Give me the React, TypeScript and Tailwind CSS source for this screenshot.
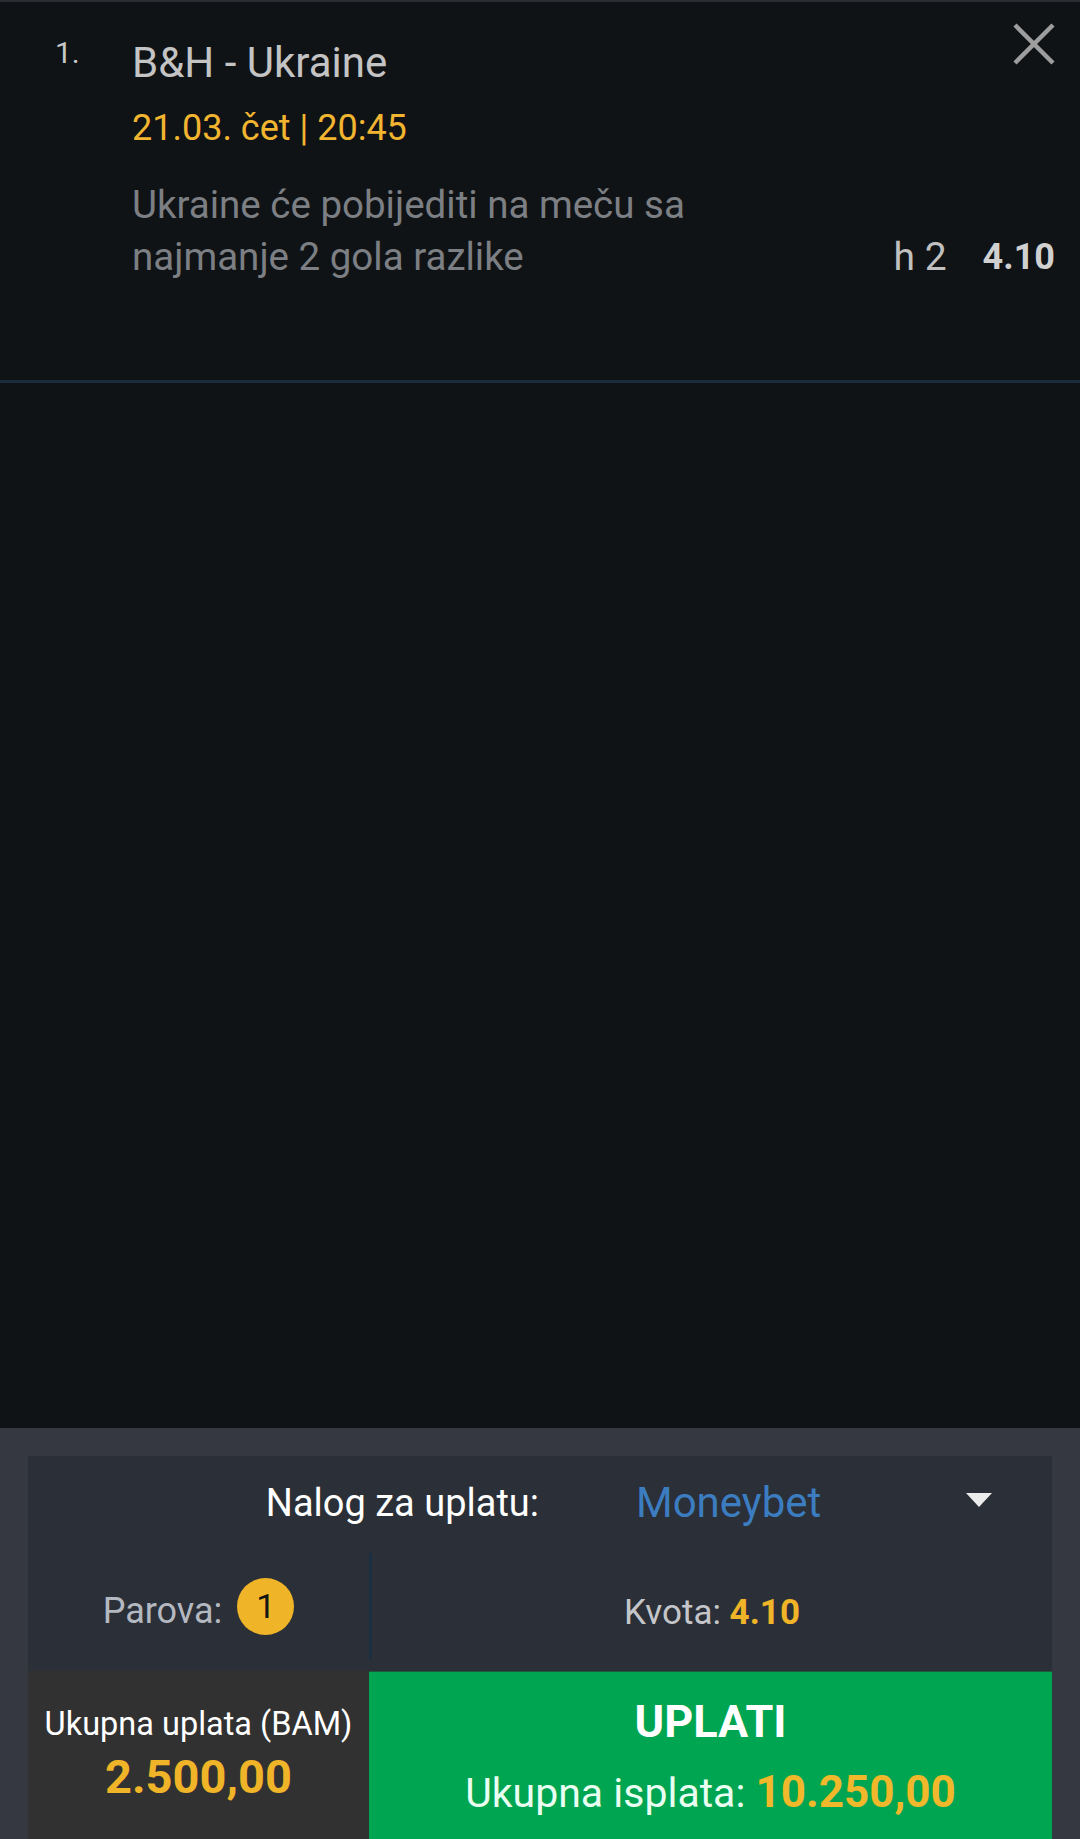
import React from "react";

export default function App() {
  return (
    <div
      className="w-[1080px] h-[1839px] flex flex-col bg-[#101316] overflow-hidden"
      style={{ fontFamily: "Roboto, 'Noto Sans', sans-serif" }}
    >
      {/* Bet item */}
      <div className="h-[380px] border-t-2 border-[#2a2d32] pt-[21px] pl-[55px] pr-[25px] flex">
        <div className="w-[77px] shrink-0 mt-[13px] text-[30px] leading-[34px] text-[#c8c8c8]">1.</div>
        <div className="flex-1 flex flex-col">
          <div className="flex justify-between items-start">
            <div className="flex flex-col">
              <div className="mt-[16px] text-[42px] leading-[48px] text-[#c4c4c4]">B&amp;H - Ukraine</div>
              <div className="mt-[19px] text-[36px] leading-[44px] text-[#f2b530]">21.03. čet | 20:45</div>
            </div>
            <button className="w-[42px] h-[42px] shrink-0">
              <svg width="42" height="42" viewBox="0 0 42 42">
                <line x1="2" y1="2" x2="40" y2="40" stroke="#9e9e9e" strokeWidth="4.5" />
                <line x1="40" y1="2" x2="2" y2="40" stroke="#9e9e9e" strokeWidth="4.5" />
              </svg>
            </button>
          </div>
          <div className="mt-[29px] flex justify-between items-end">
            <div className="text-[38.5px] leading-[52px] text-[#7c7f83]">
              Ukraine će pobijediti na meču sa
              <br />
              najmanje 2 gola razlike
            </div>
            <div className="flex items-end gap-[36px] leading-[52px]">
              <span className="text-[39px] text-[#c0c0c0]">h 2</span>
              <span className="text-[36px] font-bold text-[#d0d0d0]">4.10</span>
            </div>
          </div>
        </div>
      </div>
      <div className="h-[3px] bg-[#1b2c3d]" />

      <div className="flex-1" />

      {/* Bottom panel */}
      <div className="h-[411px] bg-[#353841] pt-[28px] px-[28px] flex flex-col">
        <div className="flex-1 bg-[#2b2f37] flex flex-col">
          <div className="h-[97px] pb-[4px] flex items-center">
            <div className="w-[511px] text-right text-[38px] leading-[46px] text-white">Nalog za uplatu:</div>
            <div className="ml-[97px] flex-1 text-[42px] leading-[50px] text-[#3b7dc0]">Moneybet</div>
            <svg className="mr-[60px] mb-[6px]" width="26" height="14" viewBox="0 0 26 14">
              <polygon points="0,0 26,0 13,14" fill="#ececec" />
            </svg>
          </div>
          <div className="grid grid-cols-[341px_1fr] h-[106px]">
            <div className="flex items-center justify-center gap-[15px]">
              <span className="pt-[10px] text-[36px] leading-[44px] text-[#b4b8c0]">Parova:</span>
              <span className="w-[57px] h-[57px] rounded-full bg-[#f0b428] flex items-center justify-center text-[34px] leading-none text-[#151515]">
                1
              </span>
            </div>
            <div className="border-l-[3px] border-[#1b2f43] pt-[14px] flex items-center justify-center">
              <span className="text-[35px] leading-[44px] text-[#c4c6ca]">
                Kvota: <span className="font-bold text-[#f0b428]">4.10</span>
              </span>
            </div>
          </div>
          <div className="h-[12px]" />
          <div className="flex-1 grid grid-cols-[341px_1fr]">
            <div className="bg-[#313131] flex flex-col items-center pt-[34px]">
              <div className="text-[32.5px] leading-[38px] text-white">Ukupna uplata (BAM)</div>
              <div className="mt-[8px] text-[47px] leading-[52px] font-bold text-[#f0b428]">2.500,00</div>
            </div>
            <div className="bg-[#00a551] border-t border-[#1c5c3c] flex flex-col items-center pt-[25px]">
              <div className="text-[45px] leading-[50px] font-bold text-white">UPLATI</div>
              <div className="mt-[19px] text-[41px] leading-[52px] text-[#e8fff1]">
                Ukupna isplata: <span className="text-[44px] font-bold text-[#f0b82a]">10.250,00</span>
              </div>
            </div>
          </div>
        </div>
      </div>
    </div>
  );
}
